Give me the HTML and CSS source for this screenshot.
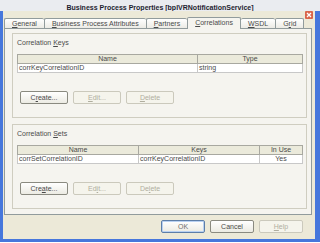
FILE: index.html
```html
<!DOCTYPE html>
<html lang="en">
<head>
    <meta charset="UTF-8">
    <meta name="viewport" content="width=device-width, initial-scale=1.0">
    <title>Business Process Properties</title>
    <link rel="stylesheet" href="styles.css">
</head>
<body>
    <div class="window">
        <div class="titlebar">Business Process Properties [bplVRNotificationService]</div>
        <span class="close">
            <svg width="8" height="8" viewBox="0 0 8 8"><path d="M2 2 L6 6 M6 2 L2 6" stroke="#fff" stroke-width="1.3"/></svg>
        </span>
        <div class="frame">
            <div class="tabs">
                <span class="tab"><u>G</u>eneral</span>
                <span class="tab"><u>B</u>usiness Process Attributes</span>
                <span class="tab"><u>P</u>artners</span>
                <span class="tab active"><u>C</u>orrelations</span>
                <span class="tab"><u>W</u>SDL</span>
                <span class="tab">G<u>r</u>id</span>
            </div>
            <div class="panel">
                <div class="group">
                    <div class="group-title">Correlation <u>K</u>eys</div>
                    <table class="grid">
                        <tr><th class="col-key">Name</th><th>Type</th></tr>
                        <tr><td>corrKeyCorrelationID</td><td>string</td></tr>
                    </table>
                    <div class="actions">
                        <button class="btn">C<u>r</u>eate...</button>
                        <button class="btn" disabled><u>E</u>dit...</button>
                        <button class="btn" disabled><u>D</u>elete</button>
                    </div>
                </div>
                <div class="group">
                    <div class="group-title">Correlation <u>S</u>ets</div>
                    <table class="grid">
                        <tr><th class="col-set">Name</th><th class="col-set">Keys</th><th>In Use</th></tr>
                        <tr><td>corrSetCorrelationID</td><td>corrKeyCorrelationID</td><td class="center">Yes</td></tr>
                    </table>
                    <div class="actions">
                        <button class="btn">Cre<u>a</u>te...</button>
                        <button class="btn" disabled>Ed<u>i</u>t...</button>
                        <button class="btn" disabled>De<u>l</u>ete</button>
                    </div>
                </div>
            </div>
            <div class="footer">
                <button class="btn default">OK</button>
                <button class="btn">Cancel</button>
                <button class="btn" disabled><u>H</u>elp</button>
            </div>
        </div>
    </div>
</body>
</html>
```

FILE: styles.css
```css
body {
    margin: 0;
    background: #fff;
    font-family: "Liberation Sans", Arial, sans-serif;
    font-size: 7px;
    color: #4a4a4a;
}
.window {
    position: relative;
    width: 320px;
}
.titlebar {
    height: 11px;
    line-height: 15px;
    background: #eaecf0;
    text-align: center;
    font-weight: bold;
    font-size: 7px;
    color: #1e1e30;
    overflow: hidden;
}
.close {
    position: absolute;
    top: 11px;
    left: 305px;
    width: 8px;
    height: 8px;
    background: #d9654a;
    border-radius: 1px;
    display: flex;
}
.frame {
    background: #ece9d8;
    border-left: 3px solid #4677dc;
    border-right: 5px solid #4677dc;
    border-bottom: 3px solid #4677dc;
    padding: 7px 3px 6px 1px;
}
.tabs {
    display: flex;
    align-items: flex-end;
    height: 10px;
}
.tab {
    height: 10px;
    line-height: 10px;
    padding: 0 7px;
    border: 1px solid #919b9c;
    border-bottom: none;
    border-right: none;
    border-radius: 2px 2px 0 0;
    background: linear-gradient(#ffffff, #ecebe5);
    box-sizing: border-box;
    white-space: nowrap;
}
.tab:last-child {
    border-right: 1px solid #919b9c;
}
.tab.active {
    height: 12px;
    margin-bottom: -1px;
    background: #f5f4ef;
    border-right: 1px solid #919b9c;
    position: relative;
    z-index: 1;
}
.tab.active + .tab {
    border-left: none;
}
.panel {
    background: #f5f4ef;
    border: 1px solid #919b9c;
    padding: 4px 4px 5px 7px;
    display: flex;
    flex-direction: column;
    gap: 6px;
}
.group {
    border: 1px solid #cfcdc0;
    padding: 4px 3px 13px 4px;
}
.group-title {
    line-height: 9px;
    margin-bottom: 7px;
}
.grid {
    width: 100%;
    border-collapse: collapse;
    border: 1px solid #a0a0a0;
    table-layout: fixed;
}
.grid th {
    background: #ebeadb;
    font-weight: normal;
    border: 1px solid #a8a8a0;
    height: 8px;
    line-height: 8px;
    padding: 0;
}
.grid td {
    background: #fff;
    border: 1px solid #c8c8c8;
    height: 8px;
    line-height: 8px;
    padding: 0 1px;
    white-space: nowrap;
    overflow: hidden;
}
.grid td.center {
    text-align: center;
}
.col-key {
    width: 179px;
}
.col-set {
    width: 120px;
}
.actions {
    display: flex;
    gap: 5px;
    margin-top: 18px;
    padding-left: 3px;
}
.btn {
    width: 48px;
    height: 13px;
    padding: 0;
    font-family: inherit;
    font-size: 7px;
    color: #4a4a4a;
    border: 1px solid #8a8a80;
    border-radius: 2px;
    background: linear-gradient(#ffffff, #ecebe3);
}
.btn:disabled {
    color: #b0ae9f;
    border-color: #cbc9bc;
    background: #f5f4ec;
}
.footer {
    display: flex;
    justify-content: flex-end;
    gap: 5px;
    margin-top: 5px;
    padding-right: 9px;
}
.footer .btn {
    width: 44px;
}
.btn.default {
    color: #707070;
    border-color: #5d7ea8;
    box-shadow: inset 0 0 0 1px #b9d1f2;
}
```
